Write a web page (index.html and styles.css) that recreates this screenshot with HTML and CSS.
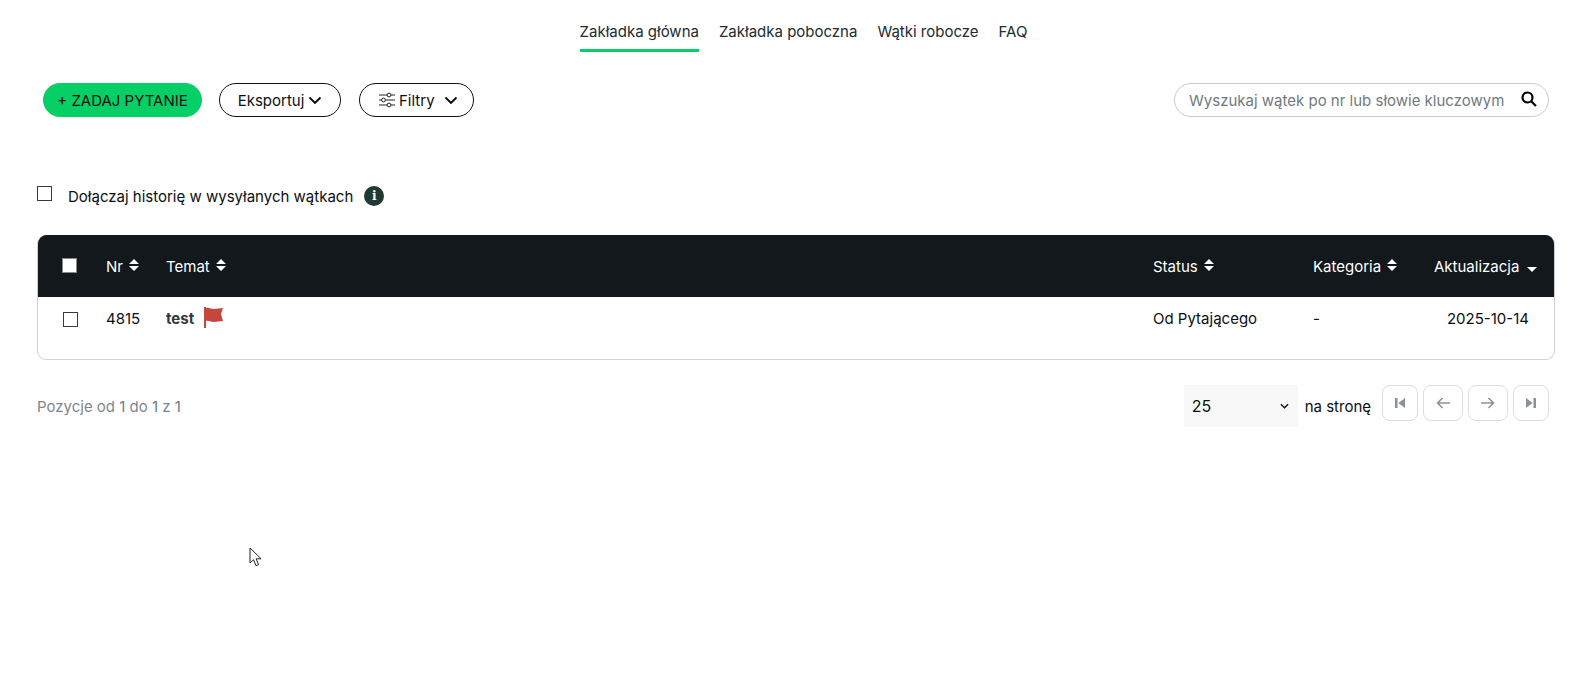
FILE: index.html
```html
<!DOCTYPE html>
<html lang="pl">
<head>
<meta charset="utf-8">
<title>Wątki</title>
<link rel="stylesheet" href="styles.css">
</head>
<body>
<nav class="tabs">
  <a class="tab active">Zakładka główna</a>
  <a class="tab">Zakładka poboczna</a>
  <a class="tab">Wątki robocze</a>
  <a class="tab">FAQ</a>
</nav>
<main class="page">
  <div class="toolbar">
    <button class="btn btn-primary">+ ZADAJ PYTANIE</button>
    <button class="btn btn-export">Eksportuj
      <svg class="chev" viewBox="0 0 14 9"><path d="M1.5 1.5 7 7l5.5-5.5" fill="none" stroke="#0a0a0a" stroke-width="1.9"/></svg>
    </button>
    <button class="btn btn-filter">
      <svg class="sliders" viewBox="0 0 16 16" fill="none" stroke="#222" stroke-width="1">
        <path d="M0 3h8M12 3h4M0 8h2.500M6.500 8H16M0 13h8M12 13h4"/>
        <circle cx="10" cy="3" r="1.900"/><circle cx="4.500" cy="8" r="1.900"/><circle cx="10" cy="13" r="1.900"/>
      </svg>
      <span class="filter-label">Filtry</span>
      <svg class="chev chev-filter" viewBox="0 0 14 9"><path d="M1.500 1.500 7 7l5.500-5.500" fill="none" stroke="#0a0a0a" stroke-width="1.900"/></svg>
    </button>
    <div class="search">
      <span class="search-text">Wyszukaj wątek po nr lub słowie kluczowym</span>
      <svg class="search-icon" viewBox="0 0 16 16" fill="none" stroke="#050505" stroke-width="2.200"><circle cx="6.500" cy="6.500" r="5"/><path d="m10.200 10.200 4.800 4.800"/></svg>
    </div>
  </div>

  <div class="history">
    <span class="check"></span>
    <span class="history-label">Dołączaj historię w wysyłanych wątkach</span>
    <span class="info">i</span>
  </div>

  <section class="table">
    <div class="row head">
      <div class="cell"><span class="check check-white"></span></div>
      <div class="cell">Nr <svg class="sort" viewBox="0 0 10 12"><path d="M5 0l5 5H0zM5 12 0 7h10z"/></svg></div>
      <div class="cell">Temat <svg class="sort" viewBox="0 0 10 12"><path d="M5 0l5 5H0zM5 12 0 7h10z"/></svg></div>
      <div class="cell">Status <svg class="sort" viewBox="0 0 10 12"><path d="M5 0l5 5H0zM5 12 0 7h10z"/></svg></div>
      <div class="cell">Kategoria <svg class="sort" viewBox="0 0 10 12"><path d="M5 0l5 5H0zM5 12 0 7h10z"/></svg></div>
      <div class="cell">Aktualizacja <svg class="sort-down" viewBox="0 0 10 5"><path d="M5 5 0 0h10z"/></svg></div>
    </div>
    <div class="row body">
      <div class="cell"><span class="check"></span></div>
      <div class="cell">4815</div>
      <div class="cell"><b class="subject">test</b>
        <svg class="flag" viewBox="0 0 19 21"><path d="M0 0h2v1c3-1 5 1 8 1s6-1 9-1l-2 6 2 7c-3 0-6 1-9 1s-5-2-8-1v7H0z" fill="#c4473c"/></svg>
      </div>
      <div class="cell">Od Pytającego</div>
      <div class="cell">-</div>
      <div class="cell cell-date">2025-10-14</div>
    </div>
  </section>

  <div class="pager">
    <span class="range">Pozycje od <em>1</em> do <em>1</em> z <em>1</em></span>
    <div class="select">25
      <svg viewBox="0 0 10 6"><path d="M1 1l4 4 4-4" fill="none" stroke="#111" stroke-width="1.500"/></svg>
    </div>
    <span class="perpage">na stronę</span>
    <button class="pg pg-edge"><svg viewBox="0 0 12 14"><path d="M0 1h3v12H0zM12 1v12L4 7z" fill="#8b9297"/></svg></button>
    <button class="pg pg-mid"><svg viewBox="0 0 14 12" fill="none" stroke="#8b9297" stroke-width="1.600"><path d="M14 6H1.500M6.500 1l-5 5 5 5"/></svg></button>
    <button class="pg pg-mid"><svg viewBox="0 0 14 12" fill="none" stroke="#8b9297" stroke-width="1.600"><path d="M0 6h12.500M7.500 1l5 5-5 5"/></svg></button>
    <button class="pg pg-edge"><svg viewBox="0 0 12 14"><path d="M12 1H9v12h3zM0 1v12l8-6z" fill="#8b9297"/></svg></button>
  </div>
</main>
<svg class="cursor" viewBox="0 0 13 20"><path d="M1 1v15l3.500-3.300 2.500 6 2.600-1.100-2.500-5.800h5z" fill="#fff" stroke="#222" stroke-width="1"/></svg>
</body>
</html>
```
FILE: styles.css
```css
* { box-sizing: border-box; }
html, body { margin: 0; height: 680px; overflow: hidden; background: #fff; }
body { font-family: Inter, "Liberation Sans", sans-serif; font-size: 15px; color: #0b0f12; position: relative; }

.tabs { display: flex; justify-content: center; gap: 20px; height: 52px; padding-left: 17px; }
.tab { height: 52px; padding-top: 22px; line-height: 20px; color: #212b30; }
.tab.active { border-bottom: 3px solid #06cf65; }

.page { padding: 0 35px 0 37px; }

.toolbar { display: flex; align-items: center; height: 34px; margin-top: 31px; padding: 0 6px; }
.btn { height: 34px; border-radius: 17px; border: 1px solid #111; background: #fff; font: inherit; color: #0b0f12; display: flex; align-items: center; padding: 0; }
.btn-primary { width: 159px; background: #06cf65; border-color: #06cf65; justify-content: center; margin-right: 17px; }
.btn-export { width: 122px; justify-content: center; gap: 4px; margin-right: 18px; }
.btn-filter { width: 115px; padding-left: 19px; }
.chev { width: 14px; height: 9px; }
.chev-filter { margin-left: 9px; }
.sliders { width: 16px; height: 16px; margin-right: 4px; }
.search { margin-left: auto; width: 375px; height: 34px; border: 1px solid #c9cccd; border-radius: 17px; display: flex; align-items: center; padding-left: 14px; color: #6f7a80; position: relative; }
.search-icon { position: absolute; right: 11px; top: 7px; width: 16px; height: 16px; }

.history { display: flex; align-items: center; height: 24px; margin-top: 67px; }
.check { display: block; width: 15px; height: 15px; border: 1px solid #3a3a3a; background: #fff; }
.history .check { position: relative; top: -3px; }
.history-label { margin-left: 16px; }
.info { width: 20px; height: 20px; border-radius: 50%; background: #1f3a33; color: #fff; margin-left: 11px; display: flex; align-items: center; justify-content: center; font: bold 12px/1 "DejaVu Serif", serif; }

.table { margin-top: 27px; height: 125px; border: 1px solid #cfd1d2; border-top: 0; border-radius: 9px; overflow: hidden; margin-left: 0; }
.row { display: grid; grid-template-columns: 69px 60px 1fr 160px 121px 121px; margin-left: -1px; margin-right: -1px; }
.head { height: 62px; background: #12181c; color: #fff; align-items: center; }
.head .cell:first-child { padding-left: 25px; padding-bottom: 2px; }
.head .check { border-color: #888; }
.body { padding-top: 10px; }
.body .cell { line-height: 24px; display: flex; align-items: center; height: 24px; }
.body .cell:first-child { padding-left: 26px; }
.cell-date { justify-content: flex-end; padding-right: 26px; }
.subject { font-weight: 700; color: #33383b; margin-right: 10px; }
.flag { width: 19px; height: 21px; margin-top: -3px; }
.sort { width: 10px; height: 12px; fill: #fff; margin-left: 2px; position: relative; top: -1px; }
.sort-down { width: 10px; height: 5px; fill: #fff; margin-left: 3px; }

.pager { display: flex; align-items: center; margin-top: 25px; height: 42px; padding-right: 6px; }
.range { color: #7e878c; margin-right: auto; }
.range em { font-style: normal; color: #6c7a86; }
.select { width: 114px; height: 42px; background: #f8f8f8; display: flex; align-items: center; justify-content: space-between; padding: 0 9px 0 8px; font-size: 16px; }
.select svg { width: 9px; height: 6px; }
.perpage { margin-left: 7px; margin-right: 11px; }
.pg { height: 36px; border: 1px solid #dcdddd; border-radius: 8px; background: #fff; padding: 0; display: flex; align-items: center; justify-content: center; margin-right: 5px; margin-bottom: 6px; }
.pg:last-child { margin-right: 0; }
.pg-edge { width: 36px; }
.pg-mid { width: 40px; }
.pg-edge svg { width: 10px; height: 12px; }
.pg-mid svg { width: 14px; height: 12px; }

.cursor { position: absolute; left: 249px; top: 547px; width: 13px; height: 20px; }
```
